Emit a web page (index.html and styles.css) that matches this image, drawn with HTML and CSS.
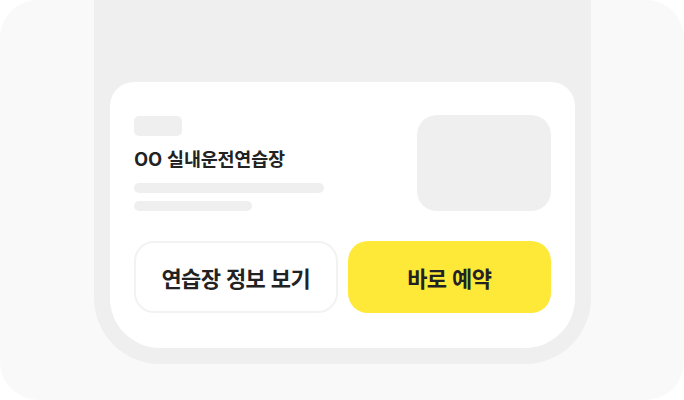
FILE: index.html
```html
<!DOCTYPE html>
<html lang="ko">
<head>
    <meta charset="UTF-8">
    <meta name="viewport" content="width=device-width, initial-scale=1.0">
    <title>실내운전연습장</title>
    <link rel="stylesheet" href="styles.css">
</head>
<body>

    <div class="stage">
        <div class="phone">
            <div class="card">
                <div class="card-top">
                    <div class="info">
                        <div class="tag"></div>
                        <h2 class="title">OO 실내운전연습장</h2>
                        <div class="line line-long"></div>
                        <div class="line line-short"></div>
                    </div>
                    <div class="thumb"></div>
                </div>
                <div class="actions">
                    <button class="btn btn-outline">연습장 정보 보기</button>
                    <button class="btn btn-primary">바로 예약</button>
                </div>
            </div>
        </div>
    </div>

</body>
</html>
```

FILE: styles.css
```css
body {
    margin: 0;
    background-color: #ffffff;
    font-family: "Noto Sans CJK KR", "Noto Sans", sans-serif;
}
.stage {
    width: 684px;
    height: 400px;
    background-color: #f9f9f9;
    border-radius: 38px;
    overflow: hidden;
}
.phone {
    margin-left: 94px;
    width: 497px;
    height: 364px;
    box-sizing: border-box;
    padding: 82px 16px 16px;
    background-color: #efefef;
    border-radius: 0 0 66px 66px;
}
.card {
    height: 266px;
    box-sizing: border-box;
    padding: 34px 24px 0;
    background-color: #ffffff;
    border-radius: 24px 24px 50px 50px;
}
.card-top {
    display: flex;
    justify-content: space-between;
    align-items: flex-start;
}
.info {
    display: flex;
    flex-direction: column;
}
.tag {
    width: 48px;
    height: 20px;
    background-color: #efefef;
    border-radius: 5px;
}
.title {
    margin: 9px 0 12px;
    font-size: 18.5px;
    font-weight: 700;
    line-height: 26px;
    color: #222222;
    letter-spacing: -0.2px;
}
.line {
    height: 10px;
    background-color: #efefef;
    border-radius: 5px;
}
.line-long {
    width: 190px;
}
.line-short {
    width: 118px;
    margin-top: 8px;
}
.thumb {
    width: 134px;
    height: 96px;
    margin-top: -1px;
    background-color: #efefef;
    border-radius: 20px;
}
.actions {
    display: grid;
    grid-template-columns: 1fr 1fr;
    gap: 10px;
    margin-top: 30px;
}
.btn {
    height: 72px;
    border-radius: 20px;
    font-family: inherit;
    font-size: 22px;
    font-weight: 700;
    color: #222222;
    letter-spacing: -0.6px;
    cursor: pointer;
}
.btn-outline {
    background-color: #ffffff;
    border: 2px solid #f2f2f2;
}
.btn-primary {
    background-color: #ffe938;
    border: none;
}
```
